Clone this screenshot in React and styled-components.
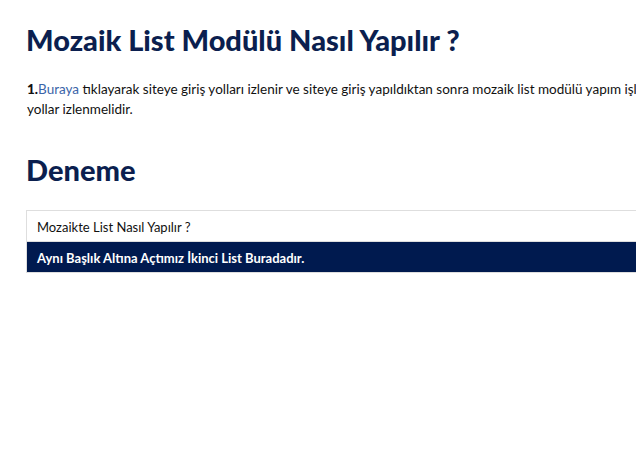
import React from "react";
import styled, { createGlobalStyle } from "styled-components";

const Global = createGlobalStyle`
  html, body { margin: 0; padding: 0; background: #fff; overflow: hidden; }
  body { font-family: "Lato", "Liberation Sans", sans-serif; color: #111; }
`;

const Page = styled.div`
  width: 820px;
  padding: 22px 0 0 26px;
  box-sizing: border-box;
`;

const Title = styled.h1`
  margin: 0;
  font-size: 29px;
  line-height: 36px;
  font-weight: 900;
  color: #0b1f4f;
`;

const Paragraph = styled.p`
  margin: 21px 0 0 1px;
  font-size: 13.5px;
  line-height: 20px;
  color: #111;
  width: 722px;
`;

const Num = styled.strong`
  font-weight: 900;
`;

const Link = styled.a`
  color: #3a64a8;
  text-decoration: none;
`;

const Subtitle = styled.h2`
  margin: 33px 0 0 0;
  font-size: 29px;
  line-height: 36px;
  font-weight: 900;
  color: #0b1f4f;
`;

const List = styled.div`
  margin-top: 22px;
  border: 1px solid #dedede;
  display: flex;
  flex-direction: column;
  width: 760px;
`;

const Row = styled.div`
  display: flex;
  align-items: center;
  padding: 1px 0 0 10px;
  box-sizing: border-box;
  height: ${(p) => (p.$first ? "30px" : "31px")};
  font-size: 13px;
  background: ${(p) => (p.$active ? "#001a4f" : "#fff")};
  color: ${(p) => (p.$active ? "#fff" : "#111")};
  font-weight: ${(p) => (p.$active ? 700 : 400)};
  border-top: ${(p) => (p.$first ? "none" : "1px solid #dedede")};
`;

export default function App() {
  return (
    <>
      <Global />
      <Page>
        <Title>Mozaik List Modülü Nasıl Yapılır ?</Title>
        <Paragraph>
          <Num>1.</Num>
          <Link href="#">Buraya</Link> tıklayarak siteye giriş yolları izlenir ve siteye giriş yapıldıktan sonra mozaik list modülü yapım işlemi için aşağıdaki yollar izlenmelidir.
        </Paragraph>
        <Subtitle>Deneme</Subtitle>
        <List>
          <Row $first>Mozaikte List Nasıl Yapılır ?</Row>
          <Row $active>Aynı Başlık Altına Açtımız İkinci List Buradadır.</Row>
        </List>
      </Page>
    </>
  );
}
